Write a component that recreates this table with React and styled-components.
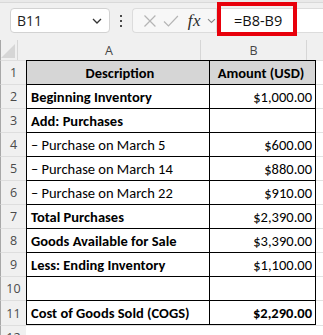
import React from 'react';
import styled, { createGlobalStyle } from 'styled-components';

const GlobalStyle = createGlobalStyle`
    * { box-sizing: border-box; }
    body { margin: 0; background: #ffffff; }
`;

const rows = [
    { n: 1, a: 'Description', b: 'Amount (USD)', head: true },
    { n: 2, a: 'Beginning Inventory', b: '$1,000.00', bold: true },
    { n: 3, a: 'Add: Purchases', b: '', bold: true },
    { n: 4, a: '– Purchase on March 5', b: '$600.00' },
    { n: 5, a: '– Purchase on March 14', b: '$880.00' },
    { n: 6, a: '– Purchase on March 22', b: '$910.00' },
    { n: 7, a: 'Total Purchases', b: '$2,390.00', bold: true },
    { n: 8, a: 'Goods Available for Sale', b: '$3,390.00', bold: true },
    { n: 9, a: 'Less: Ending Inventory', b: '$1,100.00', bold: true },
    { n: 10, a: '', b: '', bold: true },
    { n: 11, a: 'Cost of Goods Sold (COGS)', b: '$2,290.00', bold: true, boldValue: true, last: true },
];

export default function App() {
    return (
        <Page>
            <GlobalStyle />
            <TopStrip />
            <Toolbar>
                <NameBox>
                    <span>B11</span>
                    <svg width="10" height="6" viewBox="0 0 10 6">
                        <path d="M1 1 L5 5 L9 1" fill="none" stroke="#333" strokeWidth="1.3" />
                    </svg>
                </NameBox>
                <Dots>
                    <i /><i /><i />
                </Dots>
                <FxGroup>
                    <svg width="14" height="14" viewBox="0 0 14 14">
                        <path d="M1.5 1.5 L12.5 12.5 M12.5 1.5 L1.5 12.5" stroke="#b5b5b5" strokeWidth="1.2" />
                    </svg>
                    <svg width="16" height="14" viewBox="0 0 16 14">
                        <path d="M1 7.5 L5.5 12 L15 2" fill="none" stroke="#b5b5b5" strokeWidth="1.2" />
                    </svg>
                    <Fx>fx</Fx>
                    <svg width="9" height="6" viewBox="0 0 9 6">
                        <path d="M1 1 L4.5 4.5 L8 1" fill="none" stroke="#8a8a8a" strokeWidth="1.1" />
                    </svg>
                </FxGroup>
                <FormulaInput>=B8-B9</FormulaInput>
                <Highlight />
            </Toolbar>

            <HeaderRow>
                <Corner>
                    <svg width="14" height="14" viewBox="0 0 14 14">
                        <polygon points="14,0 14,14 0,14" fill="#d6d6d6" />
                    </svg>
                </Corner>
                <ColHead $width={183}>A</ColHead>
                <ColHead $width={106}>B</ColHead>
                <ColHead $width={20} />
            </HeaderRow>

            {rows.map(r => (
                <Row key={r.n} $last={r.last}>
                    <RowHead>{r.n}</RowHead>
                    <CellA $head={r.head} $bold={r.bold || r.head} $last={r.last}>{r.a}</CellA>
                    <CellB $head={r.head} $bold={r.head || r.boldValue} $last={r.last}>{r.b}</CellB>
                    <Rest />
                </Row>
            ))}
            <Row>
                <RowHead>12</RowHead>
                <Rest />
            </Row>
        </Page>
    );
}

const Page = styled.div`
    width: 323px;
    height: 335px;
    overflow: hidden;
    background: #ffffff;
    font-family: 'Carlito', 'Liberation Sans Narrow', 'Roboto', sans-serif;
`;

const TopStrip = styled.div`
    height: 3px;
    background: #e9e9e9;
    border-bottom: 1px solid #d9d9d9;
`;

const Toolbar = styled.div`
    position: relative;
    height: 37px;
    display: flex;
    align-items: flex-start;
    padding: 5px 0 0 10px;
    background: #f0f0f0;
    font-family: 'Open Sans', 'Noto Sans', sans-serif;
`;

const NameBox = styled.div`
    width: 100px;
    height: 25px;
    display: flex;
    align-items: center;
    justify-content: space-between;
    padding: 0 7px 0 6px;
    background: #ffffff;
    border: 1px solid #d2d2d2;
    border-radius: 4px;
    font-size: 14px;
    color: #1f1f1f;
`;

const Dots = styled.div`
    width: 22px;
    height: 25px;
    display: flex;
    flex-direction: column;
    align-items: center;
    justify-content: center;
    gap: 3px;

    i {
        width: 2px;
        height: 2px;
        background: #4a4a4a;
    }
`;

const FxGroup = styled.div`
    width: 84px;
    height: 25px;
    display: flex;
    align-items: center;
    gap: 6px;
    padding-left: 10px;
    background: #f7f7f7;
    border: 1px solid #dcdcdc;
    border-right: none;
    border-radius: 4px 0 0 4px;
`;

const Fx = styled.span`
    font-family: 'Liberation Serif', serif;
    font-style: italic;
    font-size: 17px;
    color: #2b2b2b;
    margin-left: 3px;
    letter-spacing: 0.5px;
`;

const FormulaInput = styled.div`
    flex: 1;
    height: 25px;
    display: flex;
    align-items: center;
    padding-left: 17px;
    background: #ffffff;
    border: 1px solid #dcdcdc;
    border-right: none;
    font-size: 14.5px;
    color: #111;
`;

const Highlight = styled.div`
    position: absolute;
    left: 217px;
    top: -1px;
    width: 80px;
    height: 34px;
    border: 4px solid #e8000b;
`;

const HeaderRow = styled.div`
    display: flex;
    height: 20px;
    background: #f0f0f0;
    font-family: 'Open Sans', 'Noto Sans', sans-serif;
    font-size: 12.5px;
    color: #454545;
`;

const Corner = styled.div`
    width: 27px;
    display: flex;
    align-items: flex-end;
    justify-content: flex-end;
    padding: 0 2px 2px 0;
    border-left: 1px solid #a8a8a8;
    border-right: 1px solid #d6d6d6;
`;

const ColHead = styled.div`
    width: ${({ $width }) => $width}px;
    flex-shrink: 0;
    display: flex;
    align-items: center;
    justify-content: center;
    border-right: 1px solid #d6d6d6;
`;

const Row = styled.div`
    display: flex;
    height: ${({ $last }) => ($last ? 25 : 24)}px;
`;

const RowHead = styled.div`
    width: 26px;
    flex-shrink: 0;
    display: flex;
    align-items: center;
    justify-content: center;
    background: #f0f0f0;
    border-left: 1px solid #a8a8a8;
    border-top: 1px solid #dedede;
    font-family: 'Open Sans', 'Noto Sans', sans-serif;
    font-size: 12.5px;
    color: #4a4a4a;
`;

const Cell = styled.div`
    flex-shrink: 0;
    display: flex;
    align-items: center;
    border-top: 1px solid #000;
    border-left: 1px solid #000;
    border-bottom: ${({ $last }) => ($last ? '1px solid #000' : 'none')};
    background: ${({ $head }) => ($head ? '#d6d6d6' : '#ffffff')};
    font-size: 14.5px;
    font-weight: ${({ $bold }) => ($bold ? 700 : 400)};
    color: #000;
    white-space: nowrap;
`;

const CellA = styled(Cell)`
    width: 183px;
    padding-left: 4px;
    justify-content: ${({ $head }) => ($head ? 'center' : 'flex-start')};
`;

const CellB = styled(Cell)`
    width: 107px;
    padding-right: 3px;
    border-right: 1px solid #000;
    justify-content: ${({ $head }) => ($head ? 'center' : 'flex-end')};
`;

const Rest = styled.div`
    flex: 1;
    border-top: 1px solid #e1e1e1;
`;
